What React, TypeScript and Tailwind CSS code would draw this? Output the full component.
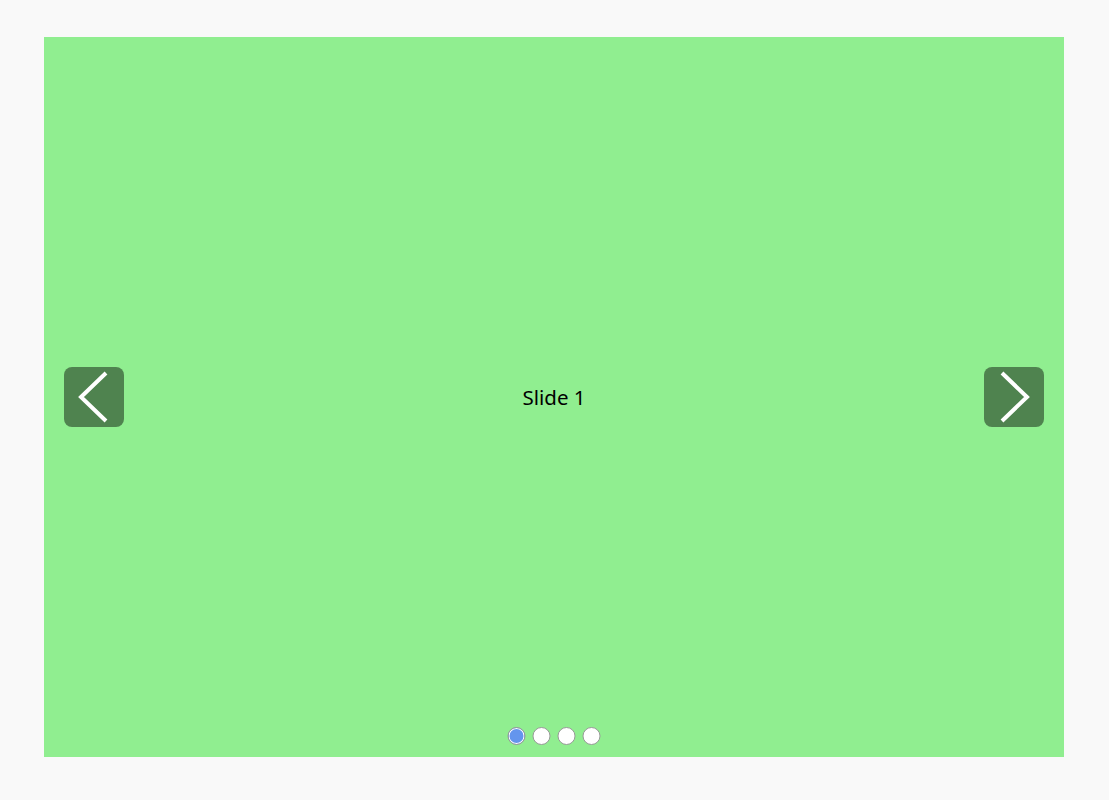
import React, { useState } from 'react';

const SLIDES = ['Slide 1', 'Slide 2', 'Slide 3', 'Slide 4'];
const COLORS = ['bg-[#90ee90]', 'bg-[#add8e6]', 'bg-[#ffb6c1]', 'bg-[#ffe4b5]'];

export default function App() {
  const [index, setIndex] = useState(0);

  const prev = () => setIndex(i => (i - 1 + SLIDES.length) % SLIDES.length);
  const next = () => setIndex(i => (i + 1) % SLIDES.length);

  return (
    <div className="min-h-[800px] bg-[#f9f9f9] pl-[44px] pt-[37px] font-['Noto_Sans',sans-serif]">
      <div className={`relative flex h-[720px] w-[1020px] items-center justify-center ${COLORS[index]}`}>
        <span className="text-[20.5px] text-black">{SLIDES[index]}</span>

        {/* Prev / next arrows */}
        <button
          onClick={prev}
          className="absolute left-5 top-1/2 flex h-[60px] w-[60px] -translate-y-1/2 items-center justify-center rounded-lg bg-black/45"
        >
          <svg width="60" height="60" viewBox="0 0 60 60" fill="none">
            <path d="M42 6 L17 30 L42 54" stroke="white" strokeWidth="4" />
          </svg>
        </button>
        <button
          onClick={next}
          className="absolute right-5 top-1/2 flex h-[60px] w-[60px] -translate-y-1/2 items-center justify-center rounded-lg bg-black/45"
        >
          <svg width="60" height="60" viewBox="0 0 60 60" fill="none">
            <path d="M18 6 L43 30 L18 54" stroke="white" strokeWidth="4" />
          </svg>
        </button>

        {/* Dots */}
        <div className="absolute bottom-3 left-1/2 flex -translate-x-1/2 gap-[7px]">
          {SLIDES.map((s, i) => (
            <button
              key={s}
              onClick={() => setIndex(i)}
              className={`h-[18px] w-[18px] rounded-full border border-[#999] ${
                i === index ? 'bg-[#6495ed] shadow-[inset_0_0_0_1px_white]' : 'bg-white'
              }`}
            />
          ))}
        </div>
      </div>
    </div>
  );
}
